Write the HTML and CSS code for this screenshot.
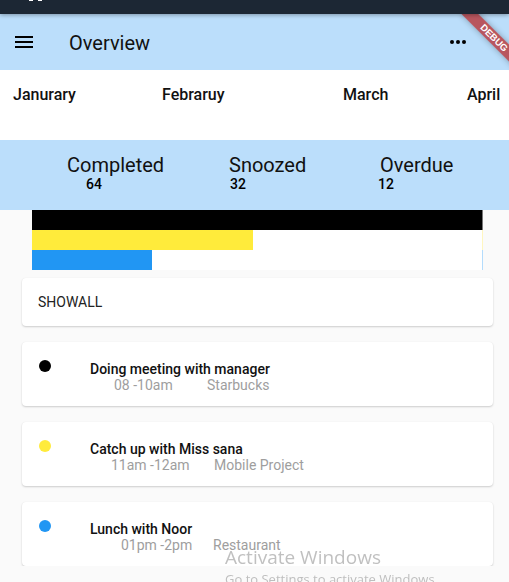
FILE: index.html
```
<!DOCTYPE html>
<html>
<head>
<meta charset="utf-8">
<link rel="stylesheet" href="styles.css">
</head>
<body>
<div class="status"><span class="sq"></span><span class="sq"></span></div>
<div class="app">
  <header class="appbar">
    <svg class="icon menu" width="24" height="24" viewBox="0 0 24 24"><path d="M3 6h18v2H3zM3 11h18v2H3zM3 16h18v2H3z" fill="#000"/></svg>
    <div class="title">Overview</div>
    <svg class="icon more" width="24" height="24" viewBox="0 0 24 24"><circle cx="6" cy="12" r="2" fill="#000"/><circle cx="12" cy="12" r="2" fill="#000"/><circle cx="18" cy="12" r="2" fill="#000"/></svg>
  </header>
  <div class="months">
    <div class="month m1">Janurary</div>
    <div class="month m2">Febraruy</div>
    <div class="month m3">March</div>
    <div class="month">April</div>
  </div>
  <div class="stats">
    <div class="stat s1"><div class="label">Completed</div><div class="num n1">64</div></div>
    <div class="stat s2"><div class="label">Snoozed</div><div class="num n2">32</div></div>
    <div class="stat"><div class="label">Overdue</div><div class="num n3">12</div></div>
  </div>
  <div class="bars">
    <div class="track t-black"><div class="fill f-black" style="width:100%"></div></div>
    <div class="track t-yellow"><div class="fill f-yellow" style="width:49%"></div></div>
    <div class="track t-blue"><div class="fill f-blue" style="width:26.7%"></div></div>
  </div>
  <div class="list">
    <div class="card showall">SHOWALL</div>
    <div class="card event">
      <span class="dot d-black"></span>
      <div class="text">
        <div class="etitle">Doing meeting with manager</div>
        <div class="sub"><span class="time tm1">08 -10am</span><span>Starbucks</span></div>
      </div>
    </div>
    <div class="card event">
      <span class="dot d-yellow"></span>
      <div class="text">
        <div class="etitle">Catch up with Miss sana</div>
        <div class="sub"><span class="time tm2">11am -12am</span><span>Mobile Project</span></div>
      </div>
    </div>
    <div class="card event">
      <span class="dot d-blue"></span>
      <div class="text">
        <div class="etitle">Lunch with Noor</div>
        <div class="sub"><span class="time tm3">01pm -2pm</span><span>Restaurant</span></div>
      </div>
    </div>
  </div>
  <div class="banner-anchor"><div class="banner">DEBUG</div></div>
</div>
<div class="activate">
  <div class="act1">Activate Windows</div>
  <div class="act2">Go to Settings to activate Windows.</div>
</div>
</body>
</html>
```
FILE: styles.css
```
html, body {
  margin: 0;
  padding: 0;
  background: #fafafa;
  font-family: Roboto, "Liberation Sans", sans-serif;
  color: #000;
  overflow: hidden;
}
.status {
  height: 14px;
  background: #1c2734;
  position: relative;
  z-index: 5;
  box-shadow: 0 1px 4px rgba(0,0,0,0.35);
  display: flex;
  padding-left: 29px;
  gap: 5px;
}
.sq {
  width: 4px;
  height: 1px;
  background: #fff;
}
.app {
  position: relative;
  overflow: hidden;
}
.appbar {
  height: 56px;
  background: #bbdefb;
  display: flex;
  align-items: center;
}
.icon { display: block; }
.menu { margin-left: 12px; }
.title {
  margin-left: 33px;
  font-size: 20px;
  font-weight: 400;
  line-height: 24px;
  padding-top: 2px;
  color: #111;
  flex: 1;
}
.more { margin-right: 39px; }
.months {
  height: 70px;
  background: #fff;
  display: flex;
  padding-left: 13px;
  padding-top: 15px;
  box-sizing: border-box;
}
.month {
  font-size: 16px;
  font-weight: 500;
  line-height: 20px;
  white-space: nowrap;
  color: #111;
}
.m1 { width: 149px; }
.m2 { width: 181px; }
.m3 { width: 124px; }
.stats {
  height: 70px;
  background: #bbdefb;
  display: flex;
  padding-left: 67px;
  padding-top: 13px;
  box-sizing: border-box;
}
.stat { white-space: nowrap; }
.s1 { width: 162px; }
.s2 { width: 151px; }
.label {
  font-size: 20px;
  line-height: 24px;
  color: #111;
}
.num {
  font-size: 14px;
  font-weight: 500;
  line-height: 14px;
}
.n1 { margin-left: 19px; }
.n2 { margin-left: 1px; }
.n3 { margin-left: -2px; }
.bars {
  margin: 0 26px 0 32px;
}
.track {
  height: 20px;
  background: #fff;
  border-right: 1px solid;
  display: flex;
}
.fill { height: 20px; }
.t-black { border-color: #777; }
.t-yellow { border-color: #fff6c0; }
.t-blue { border-color: #b4dcfc; }
.f-black { background: #000; }
.f-yellow { background: #ffeb3b; }
.f-blue { background: #2196f3; }
.list {
  padding: 8px 16px 0 22px;
  display: flex;
  flex-direction: column;
  gap: 16px;
}
.card {
  background: #fff;
  border-radius: 4px;
  box-shadow: 0 1px 2px rgba(0,0,0,0.18), 0 0 1px rgba(0,0,0,0.06);
}
.showall {
  height: 48px;
  padding-left: 16px;
  font-size: 14px;
  line-height: 48px;
  color: #222;
}
.event {
  height: 64px;
  display: flex;
  align-items: flex-start;
  padding: 18px 0 0 17px;
  box-sizing: border-box;
}
.dot {
  width: 12px;
  height: 12px;
  border-radius: 50%;
  flex: none;
}
.d-black { background: #000; }
.d-yellow { background: #ffeb3b; }
.d-blue { background: #2196f3; }
.text {
  margin-left: 39px;
  padding-top: 1px;
}
.etitle {
  font-size: 14px;
  font-weight: 500;
  line-height: 16px;
  color: #111;
}
.sub {
  display: flex;
  font-size: 14px;
  line-height: 14px;
  margin-top: 1px;
  color: #9e9e9e;
  white-space: nowrap;
}
.time { display: inline-block; }
.tm1 { margin-left: 24px; width: 93px; }
.tm2 { margin-left: 21px; width: 103px; }
.tm3 { margin-left: 31px; width: 92px; }
.banner-anchor {
  position: absolute;
  top: 0;
  left: calc(100% + 9px);
  width: 0;
  height: 0;
}
.banner {
  position: absolute;
  left: -40px;
  top: 28px;
  width: 80px;
  height: 12px;
  background: rgba(183, 28, 28, 0.7);
  box-shadow: 0 0 6px rgba(0,0,0,0.3);
  transform-origin: 40px -28px;
  transform: rotate(45deg);
  color: #fff;
  font-family: "Liberation Sans", sans-serif;
  font-size: 9.5px;
  font-weight: 700;
  line-height: 12px;
  text-align: center;
}
.activate {
  position: fixed;
  left: 225px;
  top: 544px;
  font-family: "Open Sans", "Noto Sans", sans-serif;
  color: rgba(150, 150, 150, 0.6);
  white-space: nowrap;
}
.act1 {
  font-size: 19px;
  line-height: 26px;
}
.act2 {
  font-size: 13px;
  line-height: 18px;
}
```
